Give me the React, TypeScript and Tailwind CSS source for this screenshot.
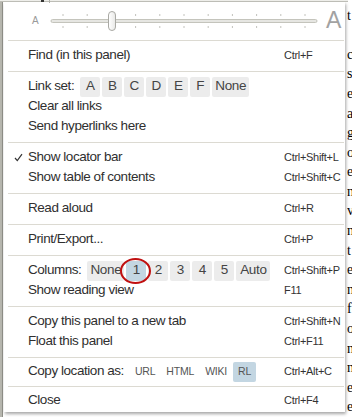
import React from 'react';

const sans = "font-['Liberation_Sans',Arial,sans-serif]";

function Sep() {
  return <div className="ml-[4px] mr-[1px] h-px bg-[#dcdad2]" />;
}

function Check() {
  return (
    <svg width="9" height="9" viewBox="0 0 9 9" className="ml-[10px]">
      <path d="M1 5 L3.3 7.6 L8 1.2" fill="none" stroke="#333" strokeWidth="1.2" />
    </svg>
  );
}

function Item({
  label,
  shortcut,
  checked,
  children
}: {
  label: string;
  shortcut?: string;
  checked?: boolean;
  children?: React.ReactNode;
}) {
  return (
    <div className="flex h-[20px] items-center">
      <span className="flex w-[24px] items-center">{checked ? <Check /> : null}</span>
      <div className="flex flex-1 items-center gap-[6px] whitespace-nowrap text-[13.5px] tracking-[-0.45px] text-[#2f2f2f]">
        <span>{label}</span>
        {children}
      </div>
      <span className="w-[61px] whitespace-nowrap text-[11px] tracking-[-0.3px] text-[#333]">{shortcut}</span>
    </div>
  );
}

function Chip({ label, wide, active }: { label: string; wide?: string; active?: boolean }) {
  return (
    <span
      className={`flex h-[20px] items-center justify-center rounded-[2px] text-[13.5px] tracking-[-0.3px] text-[#444] ${
        wide ?? 'w-[20px]'
      } ${active ? 'bg-[#c3d6e2]' : 'bg-[#ececec]'}`}
    >
      {label}
    </span>
  );
}

function Slider() {
  const ticks = Array.from({ length: 11 }, (_, i) => 13 + i * 24.2);
  return (
    <div className="flex h-[38px] items-center pl-[28px]">
      <span className="w-[7px] text-[10px] leading-none text-[#9a9a9a]">A</span>
      <svg width="268" height="22" viewBox="0 0 268 22" className="ml-[11px]">
        {ticks.map((x) => (
          <g key={x} stroke="#c2c2bc" strokeWidth="1">
            <line x1={x} y1="4" x2={x} y2="6" />
            <line x1={x} y1="16" x2={x} y2="18" />
          </g>
        ))}
        <rect x="1" y="9.5" width="266" height="3" rx="1.5" fill="#e6e6e2" stroke="#c4c4bc" />
        <defs>
          <linearGradient id="th" x1="0" x2="1">
            <stop offset="0" stopColor="#ffffff" />
            <stop offset="1" stopColor="#e8e8e6" />
          </linearGradient>
        </defs>
        <rect x="58.5" y="1.5" width="7" height="19" rx="3.5" fill="url(#th)" stroke="#a9a9a4" />
      </svg>
      <span className="ml-[8px] text-[23px] leading-none text-[#a2a2a2]">A</span>
    </div>
  );
}

const pageLines = ['t', '', 'c', 's', 'e', 'a', 'g', 'o', 'e', 'n', 'v', 'n', 't', 'e', 'n', 'f', 'o', 'n', 'n', 'e', 'e'];

export default function App() {
  return (
    <div className={`flex h-[417px] w-[352px] flex-col overflow-hidden bg-white ${sans}`}>
      <div className="relative h-[3px] w-[348px] border-b border-[#bdbdb6] bg-[#eeeeea]">
        <span className="absolute left-[41px] top-0 h-[2px] w-[3px] bg-[#333]" />
        <span className="absolute left-[49px] top-0 h-[3px] w-px bg-[#b0b0aa]" />
      </div>
      <div className="flex flex-1">
        <div className="w-[3px] border-r border-[#8f8f88] bg-[#b6b6ae]" />
        <div className="ml-[1px] flex w-[341px] flex-col">
          <div className="h-[410px] bg-white shadow-[1px_2px_3px_rgba(0,0,0,0.35)]">
            <Slider />
            <Sep />
            <div className="py-[5px]">
              <Item label="Find (in this panel)" shortcut="Ctrl+F" />
            </div>
            <Sep />
            <div className="py-[5px]">
              <Item label="Link set:">
                <div className="flex gap-[2px]">
                  {['A', 'B', 'C', 'D', 'E', 'F'].map((l) => (
                    <Chip key={l} label={l} />
                  ))}
                  <Chip label="None" wide="w-[37px]" />
                </div>
              </Item>
              <Item label="Clear all links" />
              <Item label="Send hyperlinks here" />
            </div>
            <Sep />
            <div className="py-[5px]">
              <Item label="Show locator bar" shortcut="Ctrl+Shift+L" checked />
              <Item label="Show table of contents" shortcut="Ctrl+Shift+C" />
            </div>
            <Sep />
            <div className="py-[5px]">
              <Item label="Read aloud" shortcut="Ctrl+R" />
            </div>
            <Sep />
            <div className="py-[5px]">
              <Item label="Print/Export..." shortcut="Ctrl+P" />
            </div>
            <Sep />
            <div className="py-[5px]">
              <Item label="Columns:" shortcut="Ctrl+Shift+P">
                <div className="relative flex gap-[2px]">
                  <Chip label="None" wide="w-[37px]" />
                  <Chip label="1" active />
                  {['2', '3', '4', '5'].map((l) => (
                    <Chip key={l} label={l} />
                  ))}
                  <Chip label="Auto" wide="w-[34px]" />
                  {/* red annotation ring around the selected column count */}
                  <span className="absolute left-[33px] top-[-3px] h-[26px] w-[31px] rounded-[50%] border-2 border-[#c01010]" />
                </div>
              </Item>
              <Item label="Show reading view" shortcut="F11" />
            </div>
            <Sep />
            <div className="py-[5px]">
              <Item label="Copy this panel to a new tab" shortcut="Ctrl+Shift+N" />
              <Item label="Float this panel" shortcut="Ctrl+F11" />
            </div>
            <Sep />
            <div className="py-[4px]">
              <Item label="Copy location as:" shortcut="Ctrl+Alt+C">
                <div className="flex gap-px text-[10.5px] tracking-[-0.2px] text-[#555]">
                  <span className="flex h-[20px] items-center px-[5px]">URL</span>
                  <span className="flex h-[20px] items-center px-[5px]">HTML</span>
                  <span className="flex h-[20px] items-center px-[5px]">WIKI</span>
                  <span className="flex h-[20px] items-center rounded-[2px] bg-[#c3d6e2] px-[5px]">RL</span>
                </div>
              </Item>
            </div>
            <Sep />
            <div className="py-[4px]">
              <Item label="Close" shortcut="Ctrl+F4" />
            </div>
          </div>
        </div>
        <div className="ml-[2px] flex-1 overflow-hidden pt-[4px] font-['Liberation_Serif',serif] text-[14px] leading-[19.6px] text-black">
          {pageLines.map((l, i) => (
            <div key={i} className="h-[19.6px]">
              {l}
            </div>
          ))}
        </div>
      </div>
    </div>
  );
}
